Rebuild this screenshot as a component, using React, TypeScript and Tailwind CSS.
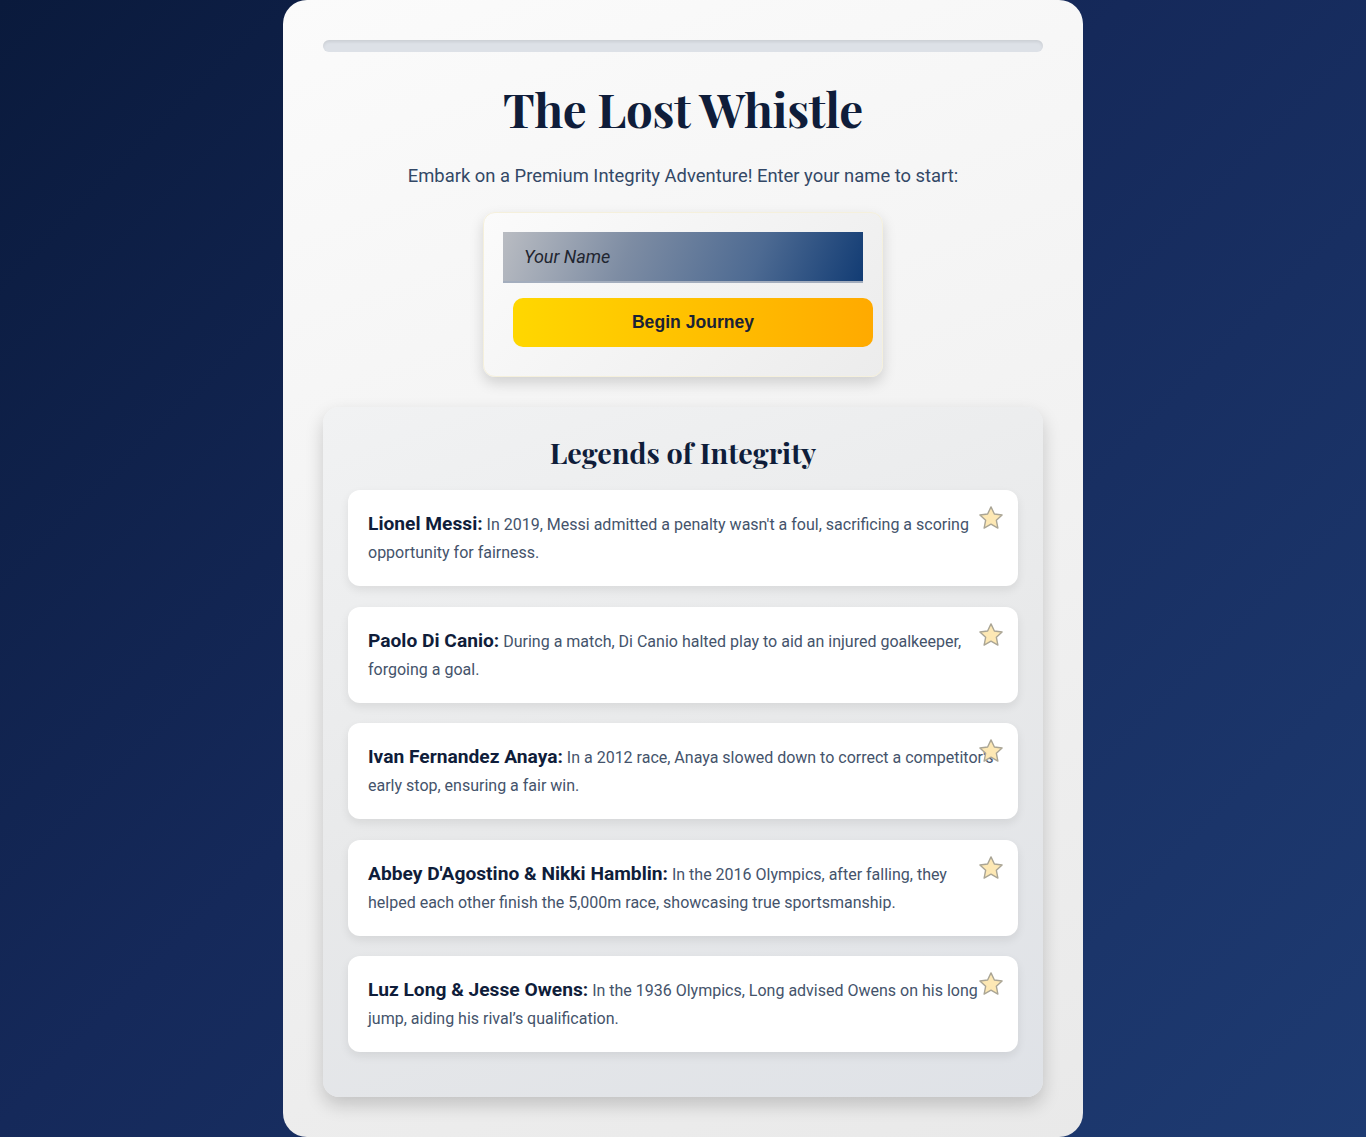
import React from "react";

const legends = [
  { name: "Lionel Messi:", text: "In 2019, Messi admitted a penalty wasn't a foul, sacrificing a scoring opportunity for fairness." },
  { name: "Paolo Di Canio:", text: "During a match, Di Canio halted play to aid an injured goalkeeper, forgoing a goal." },
  { name: "Ivan Fernandez Anaya:", text: "In a 2012 race, Anaya slowed down to correct a competitor's early stop, ensuring a fair win." },
  { name: "Abbey D'Agostino & Nikki Hamblin:", text: "In the 2016 Olympics, after falling, they helped each other finish the 5,000m race, showcasing true sportsmanship." },
  { name: "Luz Long & Jesse Owens:", text: "In the 1936 Olympics, Long advised Owens on his long jump, aiding his rival\u2019s qualification." },
];

function Star() {
  return (
    <svg width="28" height="28" viewBox="0 0 24 24" className="absolute top-[14px] right-[13px]">
      <path
        d="M12 2.5l2.9 6.1 6.6.8-4.9 4.6 1.3 6.6L12 17.3l-5.9 3.3 1.3-6.6-4.9-4.6 6.6-.8z"
        fill="#fde8b4"
        stroke="#aaa595"
        strokeWidth="1.2"
        strokeLinejoin="round"
      />
    </svg>
  );
}

export default function App() {
  return (
    <div
      className="min-h-[1137px] w-full flex justify-center bg-[linear-gradient(135deg,#0a1a3c_0%,#15295a_45%,#1e3b72_100%)]"
      style={{ fontFamily: "Roboto, 'Liberation Sans', sans-serif" }}
    >
      <div className="w-[800px] h-[1137px] rounded-[24px] bg-[linear-gradient(160deg,#fbfbfb_0%,#f2f2f2_50%,#e9e9e9_100%)] px-[40px] pt-[40px]">
        <div className="h-[12px] rounded-full bg-[#dde1e7] shadow-[inset_0_2px_3px_rgba(0,0,0,0.08)]" />
        <h1
          className="mt-[27px] text-center text-[#0f1d3a] text-[47.5px] leading-[60px] font-bold tracking-[-0.3px]"
          style={{ fontFamily: "'Playfair Display', 'Liberation Serif', serif" }}
        >
          The Lost Whistle
        </h1>
        <p className="mt-[24px] text-center text-[18.4px] leading-[26px] text-[#334866]">
          Embark on a Premium Integrity Adventure! Enter your name to start:
        </p>
        <div className="mx-auto mt-[23px] w-[400px] rounded-[12px] border border-[#f5f0dc] bg-[linear-gradient(135deg,#fbfbfb_0%,#ececec_100%)] p-[19px] pb-[29px] shadow-[0_6px_14px_rgba(0,0,0,0.15)]">
          <div className="h-[51px] border-b-2 border-[#a3adbd] bg-[linear-gradient(110deg,#b9bcc2_0%,#7d8ca3_35%,#4d6a92_70%,#123c74_100%)] flex items-center pl-[21px]">
            <span className="italic text-[18px] text-[#1f2530]">Your Name</span>
          </div>
          <div className="mt-[15px] ml-[10px] w-[360px] h-[49px] rounded-[10px] bg-[linear-gradient(90deg,#ffd700_0%,#ffaa00_100%)] flex items-center justify-center">
            <span className="text-[17.6px] font-bold text-[#1a2235]" style={{ fontFamily: "'Liberation Sans', Arial, sans-serif" }}>
              Begin Journey
            </span>
          </div>
        </div>
        <div className="mt-[30px] rounded-[16px] bg-[linear-gradient(160deg,#f1f2f3_0%,#e8e9ea_50%,#dfe2e7_100%)] px-[25px] pt-[26px] pb-[45px] shadow-[0_8px_18px_rgba(0,0,0,0.18)]">
          <h2
            className="text-center text-[28.8px] leading-[38px] font-bold text-[#0f1d3a]"
            style={{ fontFamily: "'Playfair Display', 'Liberation Serif', serif" }}
          >
            Legends of Integrity
          </h2>
          <div className="mt-[19px] flex flex-col gap-[20.5px]">
            {legends.map((l) => (
              <div
                key={l.name}
                className="relative h-[96px] rounded-[12px] bg-white px-[20px] pt-[20px] shadow-[0_4px_10px_rgba(0,0,0,0.08)]"
              >
                <p className="text-[16px] leading-[28px] text-[#44536b]">
                  <strong className="text-[19.2px] font-bold text-[#0f1d3a]">{l.name}</strong> {l.text}
                </p>
                <Star />
              </div>
            ))}
          </div>
        </div>
      </div>
    </div>
  );
}
